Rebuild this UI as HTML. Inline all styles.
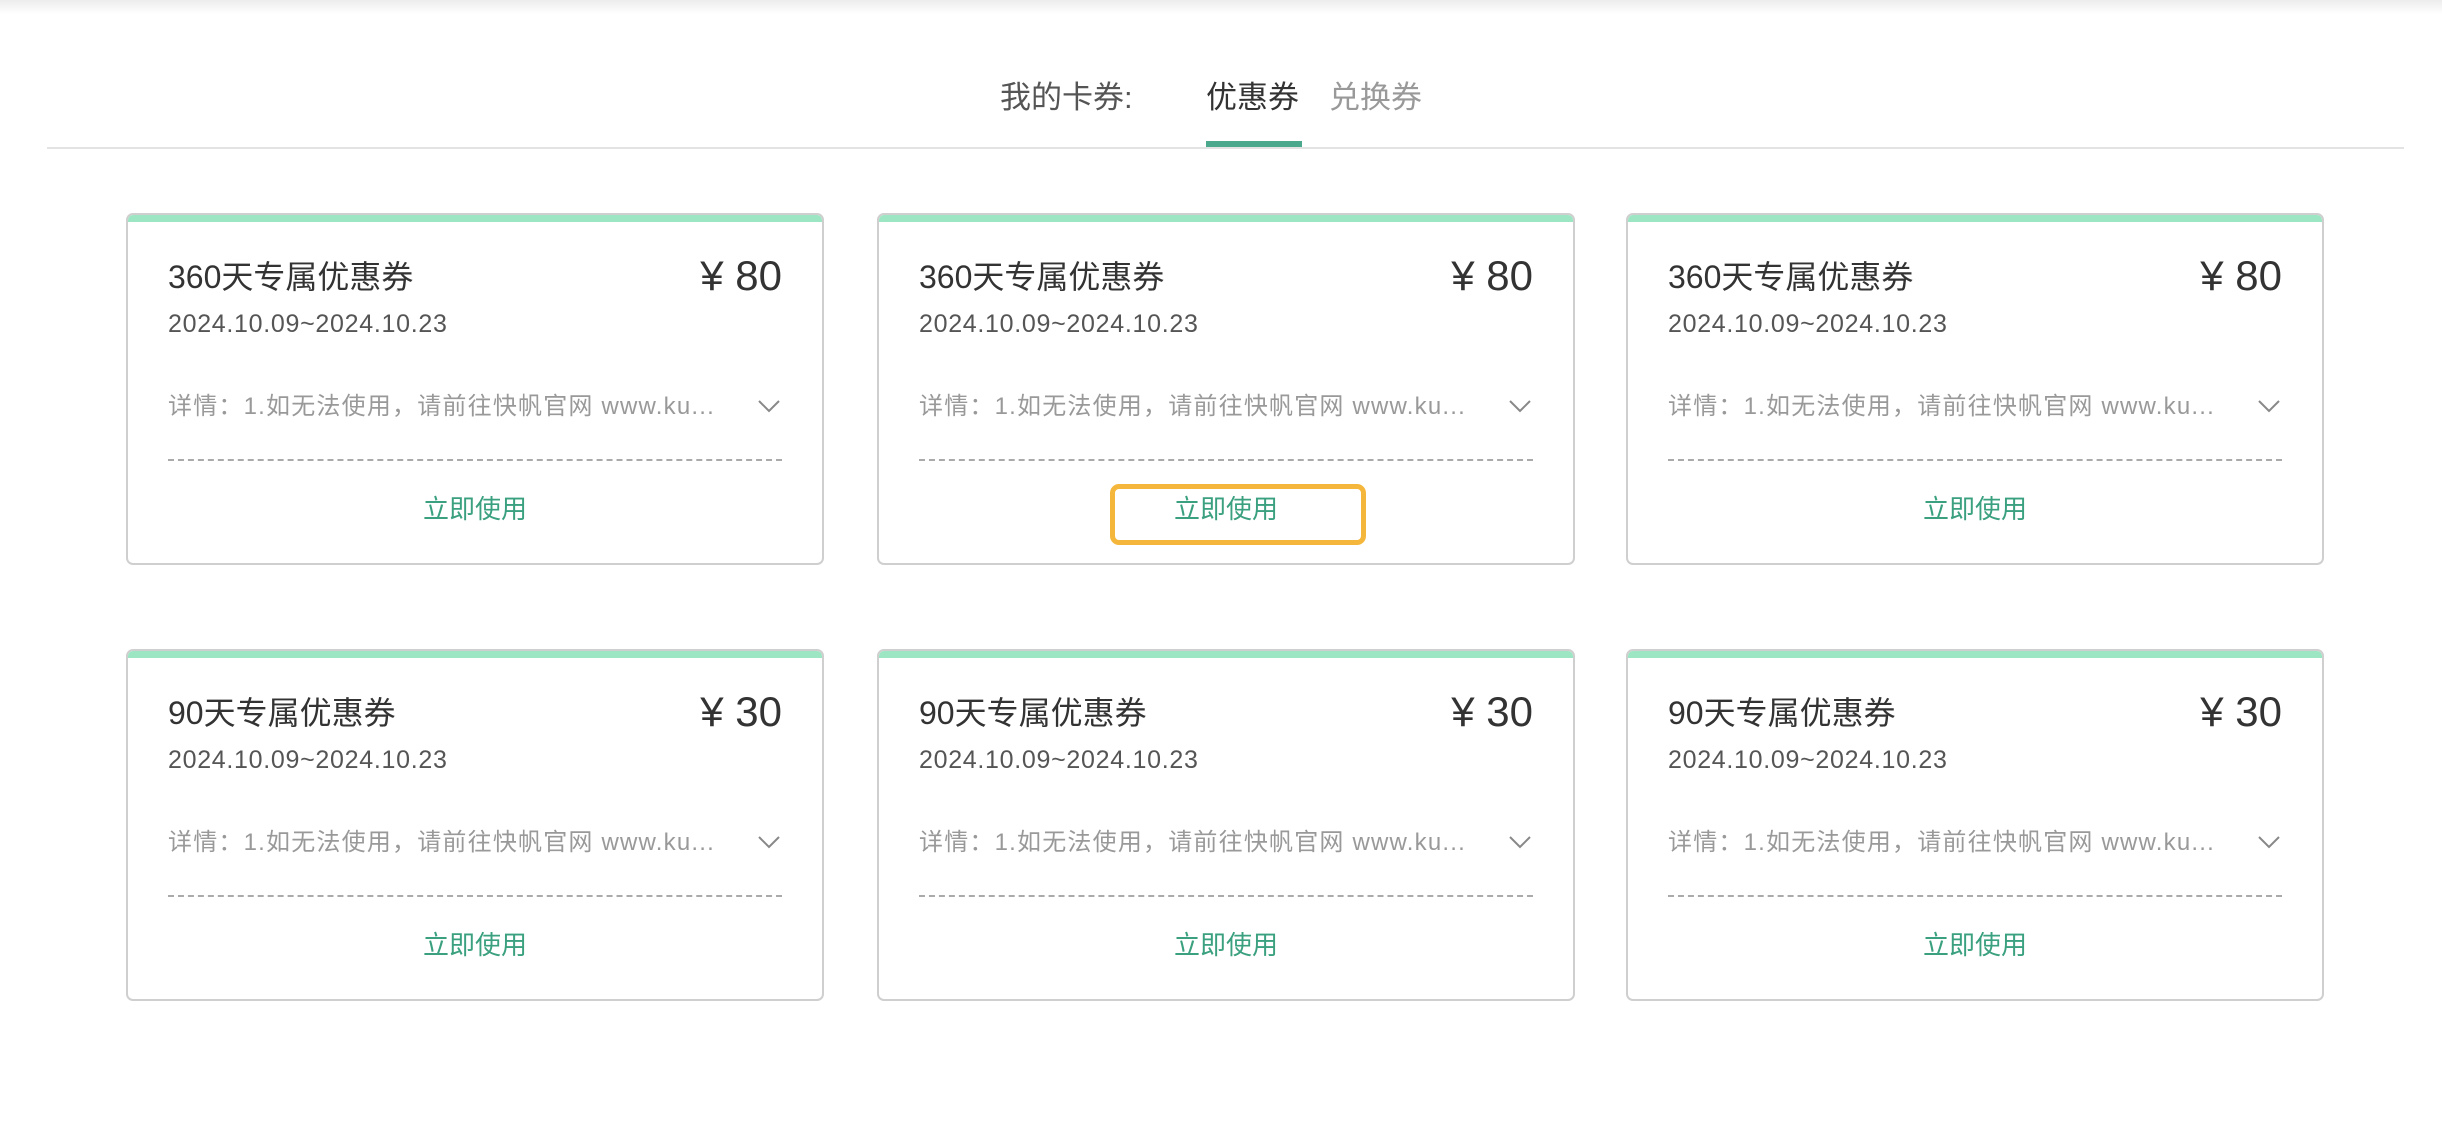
<!DOCTYPE html>
<html><head><meta charset="utf-8"><style>
*{margin:0;padding:0;box-sizing:border-box}
body{width:2442px;height:1136px;background:#fff;position:relative;overflow:hidden;font-family:"Liberation Sans","Noto Sans CJK SC",sans-serif}
.shadow{position:absolute;left:0;top:0;width:2442px;height:14px;background:linear-gradient(#ececec,#fff)}
.t{position:absolute;font-size:31px;line-height:31px;top:82px;white-space:nowrap}
.ul{position:absolute;left:1206px;top:141px;width:96px;height:6px;background:#4aa88c}
.hl{position:absolute;left:47px;top:147px;width:2357px;height:2px;background:#e3e3e3}
.card{position:absolute;width:698px;height:352px;border:2px solid #cfcfcf;border-radius:7px;overflow:hidden;background:#fff}
.card .bar{position:absolute;left:0;top:0;right:0;height:7px;background:#9de6c4}
.title{position:absolute;left:40px;top:42px;font-size:32px;line-height:40px;color:#333}
.price{position:absolute;right:40px;top:37px;font-size:42px;line-height:48px;color:#333}
.date{position:absolute;left:40px;top:94px;font-size:25px;line-height:30px;color:#555;letter-spacing:0.7px}
.det{position:absolute;left:40px;top:177px;font-size:24px;line-height:30px;color:#999;white-space:nowrap;letter-spacing:1.2px}
.chev{position:absolute;right:42px;top:184px}
.dash{position:absolute;left:40px;right:40px;top:244px;border-top:2px dashed #aaa}
.use{position:absolute;left:0;right:0;top:279px;text-align:center;font-size:26px;line-height:30px;color:#3aa07f}
.hi{position:absolute;left:1110px;top:484px;width:256px;height:61px;border:5px solid #f5b73b;border-radius:9px}
</style></head><body>
<div class="shadow"></div>
<div class="t" style="left:1000px;color:#555">我的卡券:</div>
<div class="t" style="left:1206px;color:#333">优惠券</div>
<div class="t" style="left:1329px;color:#999">兑换券</div>
<div class="ul"></div>
<div class="hl"></div>

<div class="card" style="left:126px;top:213px"><div class="bar"></div><div class="title">360天专属优惠券</div><div class="price">¥ 80</div><div class="date">2024.10.09~2024.10.23</div><div class="det">详情：1.如无法使用，请前往快帆官网 www.ku...</div><svg class="chev" width="22" height="14"><path d="M1 2 L11 12 L21 2" fill="none" stroke="#888" stroke-width="2"/></svg><div class="dash"></div><div class="use">立即使用</div></div>
<div class="card" style="left:877px;top:213px"><div class="bar"></div><div class="title">360天专属优惠券</div><div class="price">¥ 80</div><div class="date">2024.10.09~2024.10.23</div><div class="det">详情：1.如无法使用，请前往快帆官网 www.ku...</div><svg class="chev" width="22" height="14"><path d="M1 2 L11 12 L21 2" fill="none" stroke="#888" stroke-width="2"/></svg><div class="dash"></div><div class="use">立即使用</div></div>
<div class="card" style="left:1626px;top:213px"><div class="bar"></div><div class="title">360天专属优惠券</div><div class="price">¥ 80</div><div class="date">2024.10.09~2024.10.23</div><div class="det">详情：1.如无法使用，请前往快帆官网 www.ku...</div><svg class="chev" width="22" height="14"><path d="M1 2 L11 12 L21 2" fill="none" stroke="#888" stroke-width="2"/></svg><div class="dash"></div><div class="use">立即使用</div></div>

<div class="card" style="left:126px;top:649px"><div class="bar"></div><div class="title">90天专属优惠券</div><div class="price">¥ 30</div><div class="date">2024.10.09~2024.10.23</div><div class="det">详情：1.如无法使用，请前往快帆官网 www.ku...</div><svg class="chev" width="22" height="14"><path d="M1 2 L11 12 L21 2" fill="none" stroke="#888" stroke-width="2"/></svg><div class="dash"></div><div class="use">立即使用</div></div>
<div class="card" style="left:877px;top:649px"><div class="bar"></div><div class="title">90天专属优惠券</div><div class="price">¥ 30</div><div class="date">2024.10.09~2024.10.23</div><div class="det">详情：1.如无法使用，请前往快帆官网 www.ku...</div><svg class="chev" width="22" height="14"><path d="M1 2 L11 12 L21 2" fill="none" stroke="#888" stroke-width="2"/></svg><div class="dash"></div><div class="use">立即使用</div></div>
<div class="card" style="left:1626px;top:649px"><div class="bar"></div><div class="title">90天专属优惠券</div><div class="price">¥ 30</div><div class="date">2024.10.09~2024.10.23</div><div class="det">详情：1.如无法使用，请前往快帆官网 www.ku...</div><svg class="chev" width="22" height="14"><path d="M1 2 L11 12 L21 2" fill="none" stroke="#888" stroke-width="2"/></svg><div class="dash"></div><div class="use">立即使用</div></div>

<div class="hi"></div>
</body></html>
